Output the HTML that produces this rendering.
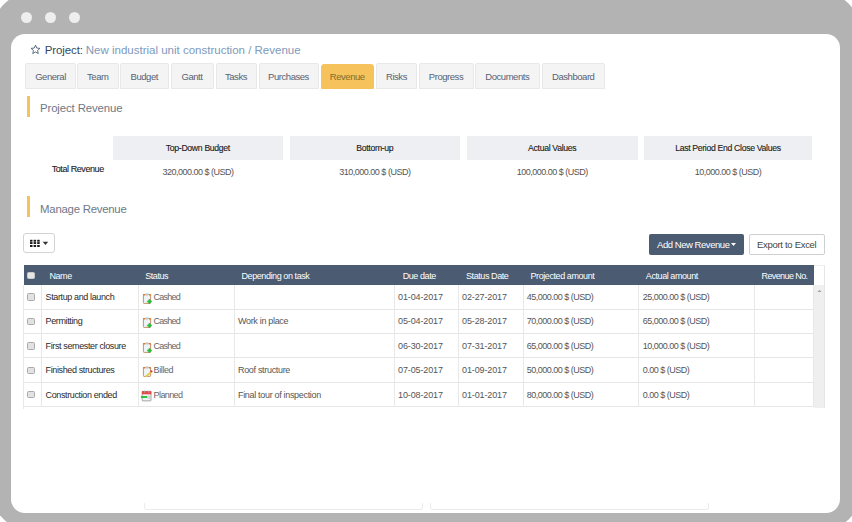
<!DOCTYPE html>
<html><head><meta charset="utf-8">
<style>
*{margin:0;padding:0;box-sizing:border-box}
html,body{width:852px;height:522px;overflow:hidden;background:#fff;font-family:"Liberation Sans",sans-serif}
.frame{position:absolute;left:-10px;top:-10px;width:872px;height:542px;background:#b3b3b3;border-radius:48px 46px 44px 45px}
.dot{position:absolute;top:12px;width:11px;height:11px;border-radius:50%;background:#eeeeee}
.panel{position:absolute;left:11px;top:34px;width:829px;height:479px;background:#fff;border-radius:14px}
.t{position:absolute;white-space:nowrap;line-height:1}
.box{position:absolute}
.tab{position:absolute;top:63.2px;height:25.4px;background:#f4f4f4;border:1px solid #e8e8e8;border-radius:2px 2px 0 0}
.tab.active{background:#f6c25c;border-color:#f6c25c;top:64px;height:24.6px;border-radius:3px 3px 0 0}
.bar{position:absolute;left:26.6px;width:3.2px;background:#f6c25c}
.sumh{position:absolute;top:135.9px;height:23.9px;background:#eeeff3}
.vl{position:absolute;width:1px;background:#e8e8e8}
.hl{position:absolute;height:1px;background:#e6e6e6}
.cb{position:absolute;width:7.6px;height:7.4px;border:1px solid #a9a9a9;border-radius:1.5px;background:#e2e2e2}
</style></head><body>
<div class="frame"></div>
<div class="dot" style="left:21px"></div>
<div class="dot" style="left:45px"></div>
<div class="dot" style="left:69px"></div>
<div class="panel"></div>
<svg width="11" height="11" viewBox="0 0 24 24" style="position:absolute;left:29.8px;top:44.2px"><path d="M12 2.5 L14.8 8.9 L21.7 9.5 L16.5 14.1 L18 20.9 L12 17.3 L6 20.9 L7.5 14.1 L2.3 9.5 L9.2 8.9 Z" fill="none" stroke="#34495e" stroke-width="1.7" stroke-linejoin="round"/></svg>
<div class="t" style="left:44.70px;top:44.87px;font-size:11.5px;color:#34495e;letter-spacing:-0.10px;">Project:</div>
<div class="t" style="left:85.80px;top:44.87px;font-size:11.5px;color:#7d99bb;letter-spacing:0.00px;">New industrial unit construction / Revenue</div>
<div class="tab" style="left:25px;width:51px"></div>
<div class="t" style="left:35.18px;top:71.76px;font-size:9.5px;color:#596273;letter-spacing:-0.45px;">General</div>
<div class="tab" style="left:77px;width:41.5px"></div>
<div class="t" style="left:87.04px;top:71.76px;font-size:9.5px;color:#596273;letter-spacing:-0.45px;">Team</div>
<div class="tab" style="left:120px;width:48.5px"></div>
<div class="t" style="left:130.55px;top:71.76px;font-size:9.5px;color:#596273;letter-spacing:-0.45px;">Budget</div>
<div class="tab" style="left:170.5px;width:43.0px"></div>
<div class="t" style="left:181.51px;top:71.76px;font-size:9.5px;color:#596273;letter-spacing:-0.45px;">Gantt</div>
<div class="tab" style="left:215.5px;width:41.0px"></div>
<div class="t" style="left:224.98px;top:71.76px;font-size:9.5px;color:#596273;letter-spacing:-0.45px;">Tasks</div>
<div class="tab" style="left:258.5px;width:60.0px"></div>
<div class="t" style="left:268.08px;top:71.76px;font-size:9.5px;color:#596273;letter-spacing:-0.45px;">Purchases</div>
<div class="tab active" style="left:320.5px;width:53.5px"></div>
<div class="t" style="left:329.81px;top:71.76px;font-size:9.5px;color:#7e6f2a;letter-spacing:-0.45px;">Revenue</div>
<div class="tab" style="left:376px;width:41px"></div>
<div class="t" style="left:386.01px;top:71.76px;font-size:9.5px;color:#596273;letter-spacing:-0.45px;">Risks</div>
<div class="tab" style="left:418.5px;width:55.0px"></div>
<div class="t" style="left:428.79px;top:71.76px;font-size:9.5px;color:#596273;letter-spacing:-0.45px;">Progress</div>
<div class="tab" style="left:475px;width:64.5px"></div>
<div class="t" style="left:485.25px;top:71.76px;font-size:9.5px;color:#596273;letter-spacing:-0.45px;">Documents</div>
<div class="tab" style="left:541.5px;width:63.5px"></div>
<div class="t" style="left:552.04px;top:71.76px;font-size:9.5px;color:#596273;letter-spacing:-0.45px;">Dashboard</div>
<div class="bar" style="top:95.6px;height:21.3px"></div>
<div class="t" style="left:40.00px;top:102.75px;font-size:11.4px;color:#6e7888;letter-spacing:-0.12px;">Project Revenue</div>
<div class="t" style="left:51.70px;top:165.18px;font-size:9px;color:#1a1a1a;letter-spacing:-0.42px;-webkit-text-stroke:0.1px #1a1a1a;">Total Revenue</div>
<div class="sumh" style="left:112.9px;width:170.1px"></div>
<div class="t" style="left:165.85px;top:144.34px;font-size:8.7px;color:#1a1a1a;letter-spacing:-0.33px;-webkit-text-stroke:0.12px #1a1a1a;">Top-Down Budget</div>
<div class="t" style="left:162.43px;top:167.58px;font-size:9px;color:#555;letter-spacing:-0.50px;">320,000.00 $ (USD)</div>
<div class="sumh" style="left:289.7px;width:170.3px"></div>
<div class="t" style="left:356.27px;top:144.34px;font-size:8.7px;color:#1a1a1a;letter-spacing:-0.33px;-webkit-text-stroke:0.12px #1a1a1a;">Bottom-up</div>
<div class="t" style="left:339.33px;top:167.58px;font-size:9px;color:#555;letter-spacing:-0.50px;">310,000.00 $ (USD)</div>
<div class="sumh" style="left:466.5px;width:171.5px"></div>
<div class="t" style="left:528.12px;top:144.34px;font-size:8.7px;color:#1a1a1a;letter-spacing:-0.33px;-webkit-text-stroke:0.12px #1a1a1a;">Actual Values</div>
<div class="t" style="left:516.73px;top:167.58px;font-size:9px;color:#555;letter-spacing:-0.50px;">100,000.00 $ (USD)</div>
<div class="sumh" style="left:644px;width:168px"></div>
<div class="t" style="left:675.15px;top:144.34px;font-size:8.7px;color:#1a1a1a;letter-spacing:-0.33px;-webkit-text-stroke:0.12px #1a1a1a;">Last Period End Close Values</div>
<div class="t" style="left:694.73px;top:167.58px;font-size:9px;color:#555;letter-spacing:-0.50px;">10,000.00 $ (USD)</div>
<div class="bar" style="top:196.1px;height:20.8px"></div>
<div class="t" style="left:40.10px;top:203.55px;font-size:11.4px;color:#6e7888;letter-spacing:-0.25px;">Manage Revenue</div>
<div class="box" style="left:23.4px;top:233.2px;width:31.6px;height:20.3px;border:1px solid #d3d3d3;border-radius:3px"></div>
<svg width="20" height="10" viewBox="0 0 20 10" style="position:absolute;left:30px;top:239px"><g fill="#1a1a1a"><rect x="0" y="0.8" width="2.5" height="1.9"/><rect x="3.6" y="0.8" width="2.5" height="1.9"/><rect x="7.2" y="0.8" width="2.5" height="1.9"/><rect x="0" y="3.1" width="2.5" height="1.9"/><rect x="3.6" y="3.1" width="2.5" height="1.9"/><rect x="7.2" y="3.1" width="2.5" height="1.9"/><rect x="0" y="6" width="2.5" height="2"/><rect x="3.6" y="6" width="2.5" height="2"/><rect x="7.2" y="6" width="2.5" height="2"/></g><path d="M12.7 2.8 L18.2 2.8 L15.45 6 Z" fill="#333"/></svg>
<div class="box" style="left:648.9px;top:233.5px;width:94.9px;height:21.3px;background:#4a5b72;border-radius:2px"></div>
<div class="t" style="left:657.00px;top:240.46px;font-size:9.5px;color:#fff;letter-spacing:-0.45px;">Add New Revenue</div>
<svg width="6" height="4" style="position:absolute;left:730.5px;top:243px"><path d="M0 0 L5 0 L2.5 3 Z" fill="#fff"/></svg>
<div class="box" style="left:749px;top:233.5px;width:75.7px;height:21.3px;border:1px solid #cfcfcf;border-radius:2px"></div>
<div class="t" style="left:757.00px;top:240.46px;font-size:9.5px;color:#444;letter-spacing:-0.30px;">Export to Excel</div>
<div class="box" style="left:23.9px;top:265px;width:789.7px;height:19.600000000000023px;background:#4a5b72"></div>
<div class="cb" style="left:27px;top:272px;background:#e6e6e6;border-color:#c8c8c8"></div>
<div class="t" style="left:49.40px;top:271.98px;font-size:9px;color:#fff;letter-spacing:-0.42px;">Name</div>
<div class="t" style="left:145.20px;top:271.98px;font-size:9px;color:#fff;letter-spacing:-0.42px;">Status</div>
<div class="t" style="left:241.50px;top:271.98px;font-size:9px;color:#fff;letter-spacing:-0.42px;">Depending on task</div>
<div class="t" style="left:402.70px;top:271.98px;font-size:9px;color:#fff;letter-spacing:-0.42px;">Due date</div>
<div class="t" style="left:466.00px;top:271.98px;font-size:9px;color:#fff;letter-spacing:-0.42px;">Status Date</div>
<div class="t" style="left:530.50px;top:271.98px;font-size:9px;color:#fff;letter-spacing:-0.42px;">Projected amount</div>
<div class="t" style="left:645.80px;top:271.98px;font-size:9px;color:#fff;letter-spacing:-0.42px;">Actual amount</div>
<div class="t" style="left:761.50px;top:271.98px;font-size:9px;color:#fff;letter-spacing:-0.60px;">Revenue No.</div>
<div class="box" style="left:813.6px;top:265px;width:11px;height:143px;background:#fff;border-right:1px solid #e6e6e6;border-top:1px solid #eee"></div>
<div class="box" style="left:813.6px;top:284.6px;width:10.5px;height:123px;background:#efefef"></div>
<svg width="6" height="4" style="position:absolute;left:816.5px;top:289px"><path d="M0.4 3 L4.6 3 L2.5 1 Z" fill="#a0a0a0"/></svg>
<div class="hl" style="left:23.9px;top:308.50px;width:789.7px"></div>
<div class="cb" style="left:27.2px;top:293.40px"></div>
<div class="t" style="left:45.60px;top:293.08px;font-size:9px;color:#2a2a2a;letter-spacing:-0.38px;">Startup and launch</div>
<svg width="12" height="12" viewBox="0 0 12 12" style="position:absolute;left:142px;top:292.90px"><rect x="1.4" y="1.5" width="7.2" height="8.9" rx="0.7" fill="#eef4f6" stroke="#c58d63" stroke-width="0.95"/><path d="M0.9 2.6 V1.9 Q0.9 1 1.9 1 H3 V2.4 Z M9.1 2.6 V1.9 Q9.1 1 8.1 1 H7 V2.4 Z" fill="#d9782f"/><rect x="3.1" y="0.6" width="3.8" height="1.9" rx="0.8" fill="#c2c2c2"/><path d="M5.3 7.7 H6.7 V6.3 H8.3 V7.7 H9.7 V9.3 H8.3 V10.7 H6.7 V9.3 H5.3 Z" fill="#1faa3c"/><circle cx="7.5" cy="8.5" r="1.55" fill="#22c23e"/></svg>
<div class="t" style="left:153.60px;top:293.08px;font-size:9px;color:#666;letter-spacing:-0.75px;">Cashed</div>
<div class="t" style="left:238.00px;top:293.08px;font-size:9px;color:#555;letter-spacing:-0.32px;"></div>
<div class="t" style="left:398.00px;top:293.08px;font-size:9px;color:#555;letter-spacing:-0.12px;">01-04-2017</div>
<div class="t" style="left:462.00px;top:293.08px;font-size:9px;color:#555;letter-spacing:-0.12px;">02-27-2017</div>
<div class="t" style="left:526.70px;top:293.08px;font-size:9px;color:#555;letter-spacing:-0.50px;">45,000.00 $ (USD)</div>
<div class="t" style="left:642.70px;top:293.08px;font-size:9px;color:#555;letter-spacing:-0.50px;">25,000.00 $ (USD)</div>
<div class="hl" style="left:23.9px;top:332.90px;width:789.7px"></div>
<div class="cb" style="left:27.2px;top:317.80px"></div>
<div class="t" style="left:45.60px;top:317.48px;font-size:9px;color:#2a2a2a;letter-spacing:-0.38px;">Permitting</div>
<svg width="12" height="12" viewBox="0 0 12 12" style="position:absolute;left:142px;top:317.30px"><rect x="1.4" y="1.5" width="7.2" height="8.9" rx="0.7" fill="#eef4f6" stroke="#c58d63" stroke-width="0.95"/><path d="M0.9 2.6 V1.9 Q0.9 1 1.9 1 H3 V2.4 Z M9.1 2.6 V1.9 Q9.1 1 8.1 1 H7 V2.4 Z" fill="#d9782f"/><rect x="3.1" y="0.6" width="3.8" height="1.9" rx="0.8" fill="#c2c2c2"/><path d="M5.3 7.7 H6.7 V6.3 H8.3 V7.7 H9.7 V9.3 H8.3 V10.7 H6.7 V9.3 H5.3 Z" fill="#1faa3c"/><circle cx="7.5" cy="8.5" r="1.55" fill="#22c23e"/></svg>
<div class="t" style="left:153.60px;top:317.48px;font-size:9px;color:#666;letter-spacing:-0.75px;">Cashed</div>
<div class="t" style="left:238.00px;top:317.48px;font-size:9px;color:#555;letter-spacing:-0.32px;">Work in place</div>
<div class="t" style="left:398.00px;top:317.48px;font-size:9px;color:#555;letter-spacing:-0.12px;">05-04-2017</div>
<div class="t" style="left:462.00px;top:317.48px;font-size:9px;color:#555;letter-spacing:-0.12px;">05-28-2017</div>
<div class="t" style="left:526.70px;top:317.48px;font-size:9px;color:#555;letter-spacing:-0.50px;">70,000.00 $ (USD)</div>
<div class="t" style="left:642.70px;top:317.48px;font-size:9px;color:#555;letter-spacing:-0.50px;">65,000.00 $ (USD)</div>
<div class="hl" style="left:23.9px;top:357.30px;width:789.7px"></div>
<div class="cb" style="left:27.2px;top:342.20px"></div>
<div class="t" style="left:45.60px;top:341.88px;font-size:9px;color:#2a2a2a;letter-spacing:-0.38px;">First semester closure</div>
<svg width="12" height="12" viewBox="0 0 12 12" style="position:absolute;left:142px;top:341.70px"><rect x="1.4" y="1.5" width="7.2" height="8.9" rx="0.7" fill="#eef4f6" stroke="#c58d63" stroke-width="0.95"/><path d="M0.9 2.6 V1.9 Q0.9 1 1.9 1 H3 V2.4 Z M9.1 2.6 V1.9 Q9.1 1 8.1 1 H7 V2.4 Z" fill="#d9782f"/><rect x="3.1" y="0.6" width="3.8" height="1.9" rx="0.8" fill="#c2c2c2"/><path d="M5.3 7.7 H6.7 V6.3 H8.3 V7.7 H9.7 V9.3 H8.3 V10.7 H6.7 V9.3 H5.3 Z" fill="#1faa3c"/><circle cx="7.5" cy="8.5" r="1.55" fill="#22c23e"/></svg>
<div class="t" style="left:153.60px;top:341.88px;font-size:9px;color:#666;letter-spacing:-0.75px;">Cashed</div>
<div class="t" style="left:238.00px;top:341.88px;font-size:9px;color:#555;letter-spacing:-0.32px;"></div>
<div class="t" style="left:398.00px;top:341.88px;font-size:9px;color:#555;letter-spacing:-0.12px;">06-30-2017</div>
<div class="t" style="left:462.00px;top:341.88px;font-size:9px;color:#555;letter-spacing:-0.12px;">07-31-2017</div>
<div class="t" style="left:526.70px;top:341.88px;font-size:9px;color:#555;letter-spacing:-0.50px;">65,000.00 $ (USD)</div>
<div class="t" style="left:642.70px;top:341.88px;font-size:9px;color:#555;letter-spacing:-0.50px;">10,000.00 $ (USD)</div>
<div class="hl" style="left:23.9px;top:381.70px;width:789.7px"></div>
<div class="cb" style="left:27.2px;top:366.60px"></div>
<div class="t" style="left:45.60px;top:366.28px;font-size:9px;color:#2a2a2a;letter-spacing:-0.38px;">Finished structures</div>
<svg width="12" height="12" viewBox="0 0 12 12" style="position:absolute;left:142px;top:366.10px"><rect x="1.4" y="1.5" width="7.2" height="8.9" rx="0.7" fill="#eef4f6" stroke="#c58d63" stroke-width="0.95"/><path d="M0.9 2.6 V1.9 Q0.9 1 1.9 1 H3 V2.4 Z M9.1 2.6 V1.9 Q9.1 1 8.1 1 H7 V2.4 Z" fill="#d9782f"/><rect x="3.1" y="0.6" width="3.8" height="1.9" rx="0.8" fill="#c2c2c2"/><path d="M3.8 9.6 L8.2 5.4 L9.6 6.6 L5.2 10.8 L3.6 11 Z" fill="#e6cc45"/><circle cx="9.4" cy="5.4" r="1.1" fill="#e03238"/></svg>
<div class="t" style="left:153.60px;top:366.28px;font-size:9px;color:#666;letter-spacing:-0.40px;">Billed</div>
<div class="t" style="left:238.00px;top:366.28px;font-size:9px;color:#555;letter-spacing:-0.32px;">Roof structure</div>
<div class="t" style="left:398.00px;top:366.28px;font-size:9px;color:#555;letter-spacing:-0.12px;">07-05-2017</div>
<div class="t" style="left:462.00px;top:366.28px;font-size:9px;color:#555;letter-spacing:-0.12px;">01-09-2017</div>
<div class="t" style="left:526.70px;top:366.28px;font-size:9px;color:#555;letter-spacing:-0.50px;">50,000.00 $ (USD)</div>
<div class="t" style="left:642.70px;top:366.28px;font-size:9px;color:#555;letter-spacing:-0.50px;">0.00 $ (USD)</div>
<div class="hl" style="left:23.9px;top:406.10px;width:789.7px"></div>
<div class="cb" style="left:27.2px;top:391.00px"></div>
<div class="t" style="left:45.60px;top:390.68px;font-size:9px;color:#2a2a2a;letter-spacing:-0.38px;">Construction ended</div>
<svg width="12" height="12" viewBox="0 0 12 12" style="position:absolute;left:141px;top:390.50px;overflow:visible"><g transform="translate(0 -1)"><rect x="1.2" y="1.4" width="8.8" height="9.5" rx="0.6" fill="#eef3f3" stroke="#8a8080" stroke-width="0.7"/><rect x="0.9" y="1.1" width="9.4" height="3.2" fill="#e84848"/><rect x="3.1" y="0.6" width="1" height="2" fill="#aaa"/><rect x="7.4" y="0.6" width="1" height="2" fill="#aaa"/><rect x="-0.1" y="5.9" width="6.4" height="2.1" rx="0.5" fill="#2fc040"/><rect x="6.5" y="5.5" width="2.5" height="3.5" fill="#cfd8d8"/></g></svg>
<div class="t" style="left:153.60px;top:390.68px;font-size:9px;color:#666;letter-spacing:-0.60px;">Planned</div>
<div class="t" style="left:238.00px;top:390.68px;font-size:9px;color:#555;letter-spacing:-0.32px;">Final tour of inspection</div>
<div class="t" style="left:398.00px;top:390.68px;font-size:9px;color:#555;letter-spacing:-0.12px;">10-08-2017</div>
<div class="t" style="left:462.00px;top:390.68px;font-size:9px;color:#555;letter-spacing:-0.12px;">01-01-2017</div>
<div class="t" style="left:526.70px;top:390.68px;font-size:9px;color:#555;letter-spacing:-0.50px;">80,000.00 $ (USD)</div>
<div class="t" style="left:642.70px;top:390.68px;font-size:9px;color:#555;letter-spacing:-0.50px;">0.00 $ (USD)</div>
<div class="vl" style="left:23.40px;top:284.6px;height:122.00px"></div>
<div class="vl" style="left:40.80px;top:284.6px;height:122.00px"></div>
<div class="vl" style="left:137.80px;top:284.6px;height:122.00px"></div>
<div class="vl" style="left:233.80px;top:284.6px;height:122.00px"></div>
<div class="vl" style="left:394.20px;top:284.6px;height:122.00px"></div>
<div class="vl" style="left:458.30px;top:284.6px;height:122.00px"></div>
<div class="vl" style="left:522.80px;top:284.6px;height:122.00px"></div>
<div class="vl" style="left:638.10px;top:284.6px;height:122.00px"></div>
<div class="vl" style="left:753.80px;top:284.6px;height:122.00px"></div>
<div class="vl" style="left:813.10px;top:284.6px;height:122.00px"></div>
<div class="vl" style="left:23.4px;top:406.60px;height:2px"></div>
<div class="box" style="left:143.5px;top:503px;width:279px;height:7px;border:1px solid #ececec;border-top:none;border-radius:0 0 3px 3px"></div>
<div class="box" style="left:430px;top:503px;width:279.3px;height:7px;border:1px solid #ececec;border-top:none;border-radius:0 0 3px 3px"></div>
</body></html>
